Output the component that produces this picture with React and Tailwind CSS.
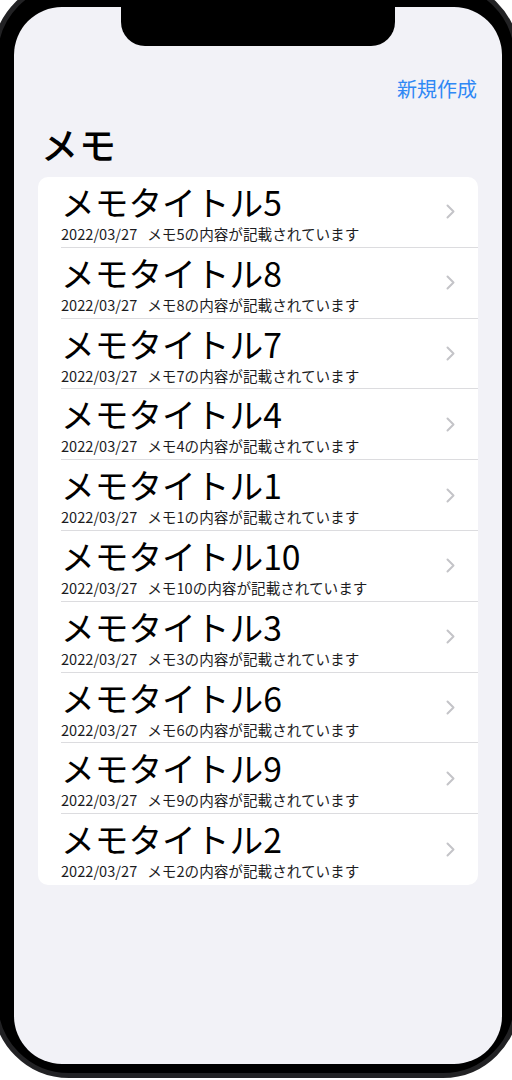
const memos = [5, 8, 7, 4, 1, 10, 3, 6, 9, 2];

function Chevron() {
  return (
    <svg width="9" height="15" viewBox="0 0 9 15" fill="none">
      <polyline points="1.5,1.5 7.5,7.5 1.5,13.5" stroke="#c4c4c8" strokeWidth="2" strokeLinecap="round" strokeLinejoin="round" />
    </svg>
  );
}

function MemoRow({ n, last }) {
  return (
    <div className="h-[70.8px] pl-[23px] flex">
      <div className={`flex-1 flex items-center pr-[23px] ${last ? "" : "border-b border-[#dcdcdf]"}`}>
        <div className="flex-1 self-start flex flex-col pt-[2px]">
          <p className="text-[33.7px] leading-[46px] text-black">メモタイトル{n}</p>
          <p className="text-[14.6px] leading-[18px] text-[#1c1c1e] whitespace-nowrap">
            <span>2022/03/27</span>
            <span className="ml-[10px]">メモ{n}の内容が記載されています</span>
          </p>
        </div>
        <Chevron />
      </div>
    </div>
  );
}

export default function App() {
  return (
    <div className="w-[512px] h-[1080px] bg-white overflow-hidden" style={{ fontFamily: '"Noto Sans CJK JP", "Noto Sans", sans-serif' }}>
      <div className="w-[526px] h-[1098px] -ml-[7px] -mt-[20px] rounded-[76px] bg-black border-[5px] border-[#222224] pl-[16px] pr-[12px] pt-[22px] pb-[9px]">
        <div className="relative h-full bg-[#f2f2f7] rounded-[48px] overflow-hidden">
          {/* notch */}
          <div className="absolute left-[107px] top-0 w-[274px] h-[39px] bg-black rounded-b-[24px]" />

          <div className="flex justify-end pr-[25px] pt-[67px]">
            <span className="text-[20px] leading-[29px] text-[#2f88f5]">新規作成</span>
          </div>
          <h1 className="pl-[27px] mt-[15px] text-[37px] leading-[52px] font-medium tracking-[1px] text-black">メモ</h1>
          <div className="mx-[24px] mt-[7px] bg-white rounded-[10px] overflow-hidden">
            {memos.map((n, i) => (
              <MemoRow key={n} n={n} last={i === memos.length - 1} />
            ))}
          </div>
        </div>
      </div>
    </div>
  );
}
